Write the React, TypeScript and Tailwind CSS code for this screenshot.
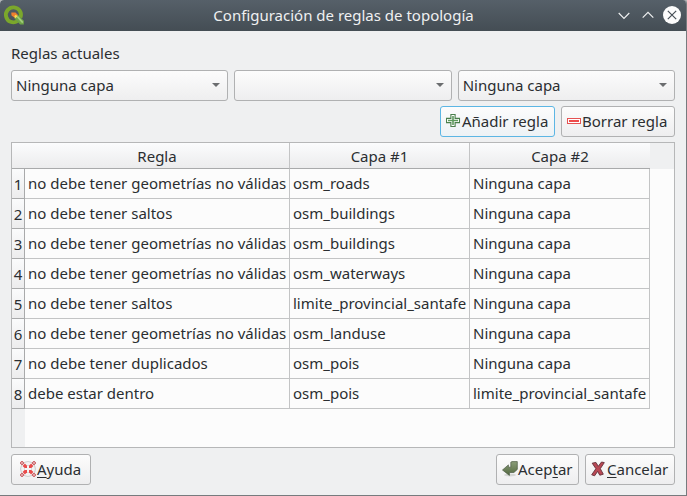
import type { ReactNode } from "react";

type Rule = [string, string, string];

const rules: Rule[] = [
  ["no debe tener geometrías no válidas", "osm_roads", "Ninguna capa"],
  ["no debe tener saltos", "osm_buildings", "Ninguna capa"],
  ["no debe tener geometrías no válidas", "osm_buildings", "Ninguna capa"],
  ["no debe tener geometrías no válidas", "osm_waterways", "Ninguna capa"],
  ["no debe tener saltos", "limite_provincial_santafe", "Ninguna capa"],
  ["no debe tener geometrías no válidas", "osm_landuse", "Ninguna capa"],
  ["no debe tener duplicados", "osm_pois", "Ninguna capa"],
  ["debe estar dentro", "osm_pois", "limite_provincial_santafe"],
];

function QgisLogo() {
  return (
    <svg width="22" height="22" viewBox="0 0 22 22" className="block shrink-0">
      <path d="M14.4 17.2A7.5 7.5 0 1 1 17.4 13.6" fill="none" stroke="#7ba72b" strokeWidth="3.9" />
      <path d="M12 11.4l2.8-.6 6 6v3.6h-3.6L11.4 14.6z" fill="#6fa646" />
      <path d="M14.4 12.6l5.4 6" stroke="#a3cb7d" strokeWidth="1.6" />
      <path d="M8.3 8.6h4.2l2.4 2.3-2.8 3.2-3.6-2.6z" fill="#ef7f2f" />
      <path d="M12.4 10.8l2.4 1.2-2.4 2.2-1.2-1.6z" fill="#f3dc55" />
    </svg>
  );
}

function PlusIcon() {
  return (
    <svg width="16" height="16" viewBox="0 0 16 16" className="block shrink-0">
      <path d="M4.9 1.5h4.2v3.9h4.4v4.2H9.1v3.9H4.9V9.6H.5V5.4h4.4z" fill="#fff" stroke="#4a7f4c" strokeWidth="1.1" />
      <path d="M6.2 3h1.6v3.7H12v1.6H7.8V12H6.2V8.3H2V6.7h4.2z" fill="#5d9a5d" />
    </svg>
  );
}

function MinusIcon() {
  return (
    <svg width="16" height="16" viewBox="0 0 16 16" className="block shrink-0">
      <rect x="1.5" y="5.5" width="13" height="5" fill="#fff" stroke="#e55353" />
      <rect x="3" y="7" width="10" height="2" fill="#ee4b4b" />
    </svg>
  );
}

function HelpIcon() {
  return (
    <svg width="17" height="16" viewBox="0 0 17 16" className="block shrink-0">
      <circle cx="8" cy="8" r="5.6" fill="none" stroke="#c6c6c6" strokeWidth="4.4" />
      <circle cx="8" cy="8" r="5.4" fill="none" stroke="#f3f3f3" strokeWidth="3" />
      <g fill="#ea4b4b">
        <path d="M2.6 4.9l2.3-2.3 2.1 2.1v2.3H4.7z" />
        <path d="M13.4 4.9l-2.3-2.3L9 4.7V7h2.3z" />
        <path d="M2.6 11.1l2.3 2.3L7 11.3V9H4.7z" />
        <path d="M13.4 11.1l-2.3 2.3L9 11.3V9h2.3z" />
      </g>
      <g fill="#fbf1f1" stroke="#c04046" strokeWidth="1">
        <circle cx="2" cy="2" r="1.4" />
        <circle cx="14" cy="2" r="1.4" />
        <circle cx="2" cy="14" r="1.4" />
        <circle cx="14" cy="14" r="1.4" />
      </g>
    </svg>
  );
}

function AcceptIcon() {
  return (
    <svg width="16" height="16" viewBox="0 0 16 16" className="block shrink-0">
      <defs>
        <linearGradient id="accept" x1="0" y1="0" x2="0" y2="1">
          <stop offset="0" stopColor="#8a9d79" />
          <stop offset="1" stopColor="#53683f" />
        </linearGradient>
      </defs>
      <ellipse cx="8" cy="14" rx="6" ry="1.5" fill="#d5d7d5" />
      <path d="M8.8 1.2L10 .6h5.3v7.8l-3.4 3.1H7.4v2.9L.5 9 6.4 3.9v2.3h2.4z" fill="url(#accept)" stroke="#4c5a44" strokeWidth=".7" strokeLinejoin="round" />
    </svg>
  );
}

function CancelIcon() {
  return (
    <svg width="14" height="16" viewBox="0 0 14 16" className="block shrink-0">
      <path
        d="M1.2 2.2l3.7-.8 2.4 3.9L10.5 1l2.8.6-4 6.1 3 5.5-3.5 1-2.2-3.8-3 4.4-2.9-1 4.2-6.1z"
        fill="#b94955"
        stroke="#63303a"
        strokeWidth=".9"
        strokeLinejoin="round"
      />
    </svg>
  );
}

function ComboBox({ value }: { value: string }) {
  return (
    <div className="flex h-[31px] flex-1 items-center justify-between rounded-[3px] border border-[#b0b1b2] bg-linear-to-b from-[#fcfcfc] to-[#eeeeef] pr-[7px] pb-px pl-1">
      <span>{value}</span>
      <svg width="8" height="4" viewBox="0 0 8 4" className="block">
        <path d="M0 0h8L4 4z" fill="#6b6d6f" />
      </svg>
    </div>
  );
}

function Button({ icon, className, children }: { icon: ReactNode; className: string; children: ReactNode }) {
  return (
    <button className={`flex h-[31px] items-center rounded-[3px] border bg-linear-to-b pb-px whitespace-nowrap ${className}`}>
      {icon}
      <span>{children}</span>
    </button>
  );
}

function Mnemonic({ children }: { children: string }) {
  return <span className="underline decoration-1 underline-offset-2 [text-decoration-skip-ink:none]">{children}</span>;
}

const plain = "border-[#b0b1b2] from-[#fcfcfc] to-[#eeeeef]";
const headCell = "flex items-center justify-center border-b border-[#a9aaab] bg-linear-to-b from-[#fbfcfd] to-[#ececed]";
const bodyCell = "flex items-center border-r border-b border-[#c3c4c5] pb-px pl-[3px]";

export default function App() {
  return (
    <div className="bg-[#b5b7b9]">
      <div className="flex h-[496px] w-[687px] flex-col overflow-hidden rounded-t-[4px] border-r border-b border-[#777b7e] bg-[#eff0f1] font-['Noto_Sans',sans-serif] text-[15px] leading-5 text-[#2b2e31]">
        <header className="flex h-[31px] shrink-0 items-center bg-linear-to-b from-[#566069] to-[#444d54] pr-[5px] pb-px pl-[3px] text-[#eff0f1]">
          <div className="w-[67px]">
            <QgisLogo />
          </div>
          <h1 className="flex-1 text-center">Configuración de reglas de topología</h1>
          <div className="flex w-[64px] items-center">
            <svg width="12" height="8" viewBox="0 0 12 8" className="mt-px ml-px">
              <path d="M.7 1L6 6.3 11.3 1" fill="none" stroke="#eff0f1" strokeWidth="1.2" />
            </svg>
            <svg width="12" height="8" viewBox="0 0 12 8" className="ml-3">
              <path d="M.7 6.7L6 1.4l5.3 5.3" fill="none" stroke="#eff0f1" strokeWidth="1.2" />
            </svg>
            <svg width="18" height="18" viewBox="0 0 18 18" className="ml-auto">
              <circle cx="9" cy="9" r="9" fill="#fcfcfc" />
              <path d="M4.8 4.8l8.4 8.4m0-8.4l-8.4 8.4" stroke="#475057" strokeWidth="1.2" />
            </svg>
          </div>
        </header>

        <main className="flex flex-1 flex-col px-[11px]">
          <p className="mt-3">Reglas actuales</p>
          <div className="mt-[7px] flex gap-1.5">
            <ComboBox value="Ninguna capa" />
            <ComboBox value="" />
            <ComboBox value="Ninguna capa" />
          </div>
          <div className="mt-[5px] flex justify-end gap-1.5">
            <Button icon={<PlusIcon />} className="w-[115px] border-[#5cb6e4] from-[#fcfcfc] to-[#edf2f5] pl-[5px]">
              Añadir regla
            </Button>
            <Button icon={<MinusIcon />} className={`w-[114px] pl-1 ${plain}`}>
              Borrar regla
            </Button>
          </div>

          <div className="mt-[5px] h-[306px] border border-[#b6b7b8] bg-[#fcfcfc]">
            <div className="flex h-[26px] bg-[#eff0f1]">
              <div className={`w-[13px] ${headCell}`} />
              <div className={`w-[265px] border-r border-r-[#c3c4c5] ${headCell}`}>Regla</div>
              <div className={`w-[180px] border-r border-r-[#c3c4c5] ${headCell}`}>Capa #1</div>
              <div className={`w-[180px] ${headCell}`}>Capa #2</div>
            </div>
            <div className="flex h-[278px] flex-col">
              {rules.map(([rule, first, second], i) => (
                <div key={i} className="flex h-[30px] shrink-0 whitespace-nowrap">
                  <div className="flex w-[13px] items-center justify-center border-r border-b border-[#a9aaab] bg-linear-to-b from-[#fafbfc] to-[#ececed] pt-px">
                    {i + 1}
                  </div>
                  <div className={`w-[265px] ${bodyCell}`}>{rule}</div>
                  <div className={`w-[180px] ${bodyCell}`}>{first}</div>
                  <div className={`w-[180px] ${bodyCell}`}>{second}</div>
                </div>
              ))}
              <div className="w-[13px] flex-1 bg-[#eff0f1]" />
            </div>
          </div>

          <footer className="mt-1.5 flex gap-1.5">
            <Button icon={<HelpIcon />} className={`mr-auto w-[80px] pl-2 ${plain}`}>
              <Mnemonic>A</Mnemonic>yuda
            </Button>
            <Button icon={<AcceptIcon />} className={`w-[83px] pl-[5px] ${plain}`}>
              Acep<Mnemonic>t</Mnemonic>ar
            </Button>
            <Button icon={<CancelIcon />} className={`w-[90px] gap-[2px] pl-[5px] ${plain}`}>
              <Mnemonic>C</Mnemonic>ancelar
            </Button>
          </footer>
        </main>
      </div>
    </div>
  );
}
